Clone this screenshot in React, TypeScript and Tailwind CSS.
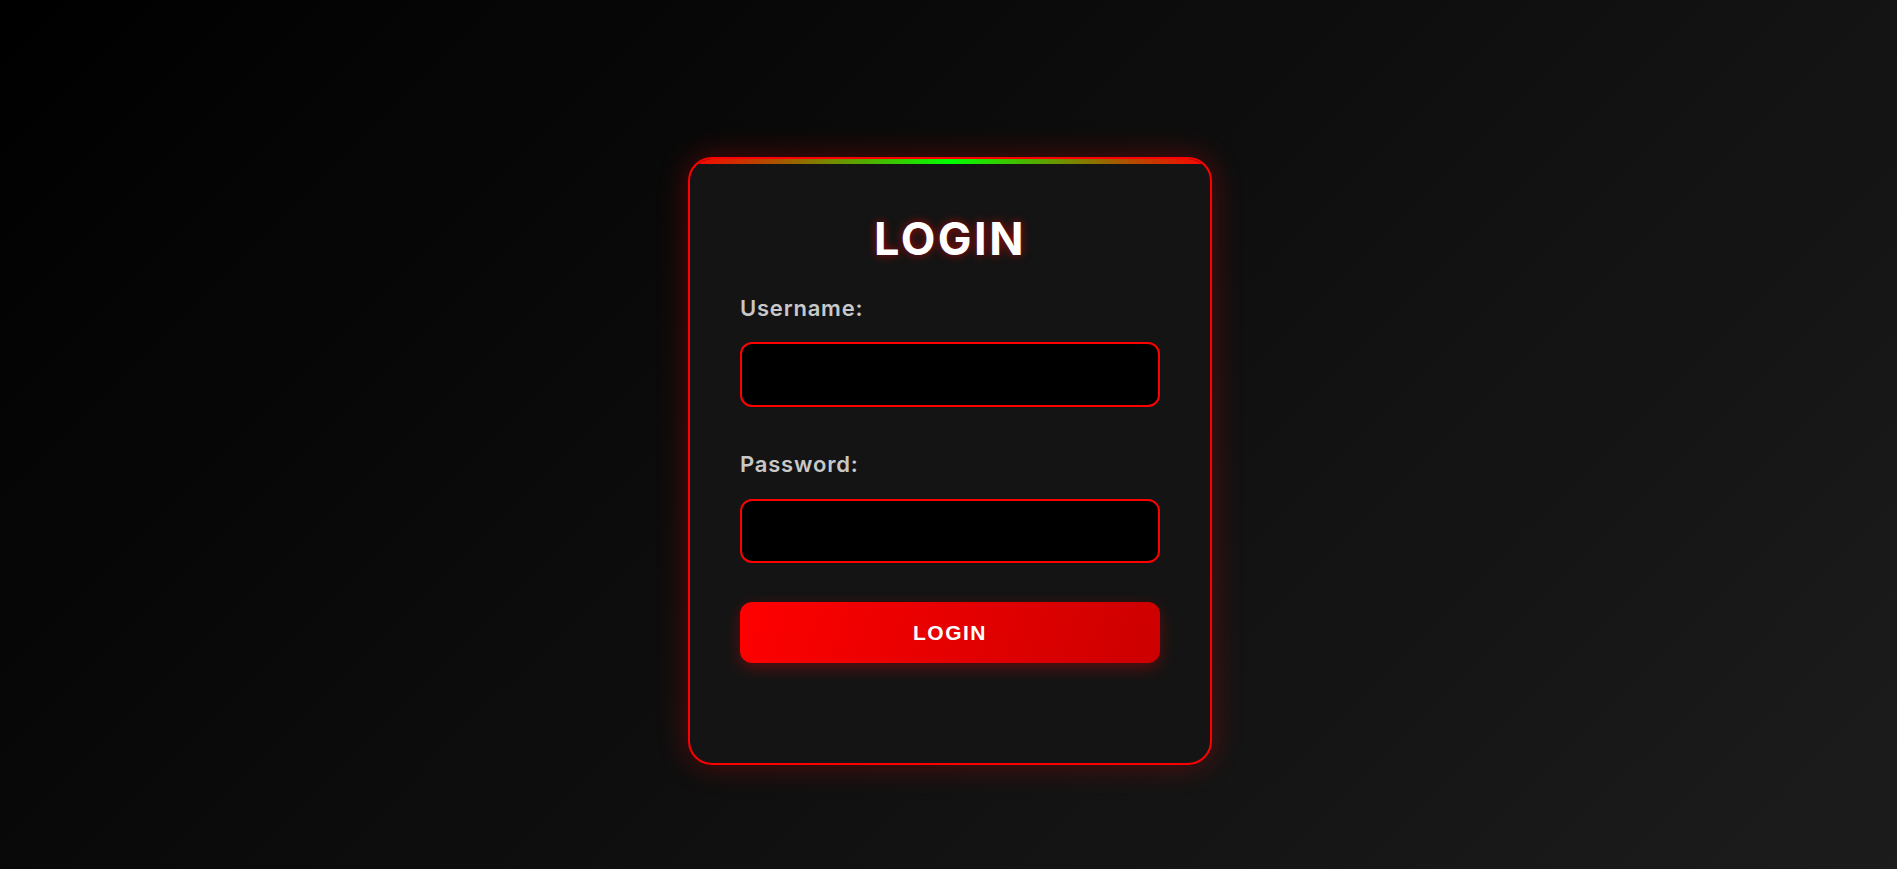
import React from 'react';

const App: React.FC = () => {
  return (
    <div
      className="min-h-screen w-full flex justify-center pt-[157px] bg-[linear-gradient(135deg,#000000,#1c1c1c)]"
      style={{ fontFamily: 'Inter, "Noto Sans", sans-serif' }}
    >
      {/* Card */}
      <div className="relative ml-[3px] w-[524px] h-[608px] self-start rounded-[24px] border-2 border-[#ff0000] bg-[#141414] overflow-hidden shadow-[0_0_30px_rgba(255,0,0,0.3)] px-[50px] pt-[57px]">
        <div className="absolute top-0 left-0 right-0 h-[5px] bg-[linear-gradient(90deg,#ff0000,#00ff00,#ff0000)]" />

        <h1 className="text-center text-white font-bold text-[45px] leading-none tracking-[2.5px] [text-shadow:0_0_10px_rgba(255,0,0,0.6)]">
          LOGIN
        </h1>

        <form className="flex flex-col mt-[36px]" onSubmit={(e) => e.preventDefault()}>
          <label className="text-[#c8c8c8] font-semibold text-[22px] leading-none tracking-[0.8px]">Username:</label>
          <input
            type="text"
            className="mt-[23px] h-[65px] w-full rounded-[12px] border-2 border-[#ff0000] bg-black px-4 text-white outline-none"
          />

          <label className="mt-[46px] text-[#c8c8c8] font-semibold text-[22px] leading-none tracking-[0.8px]">Password:</label>
          <input
            type="password"
            className="mt-[24px] h-[64px] w-full rounded-[12px] border-2 border-[#ff0000] bg-black px-4 text-white outline-none"
          />

          <button
            type="submit"
            className="mt-[39px] h-[61px] w-full rounded-[12px] bg-[linear-gradient(110deg,#ff0000,#cc0000)] text-white font-bold text-[21px] tracking-[1.5px] shadow-[0_5px_15px_rgba(255,0,0,0.3)]"
            style={{ fontFamily: '"Liberation Sans", Arial, sans-serif' }}
          >
            LOGIN
          </button>
        </form>
      </div>
    </div>
  );
};

export default App;
